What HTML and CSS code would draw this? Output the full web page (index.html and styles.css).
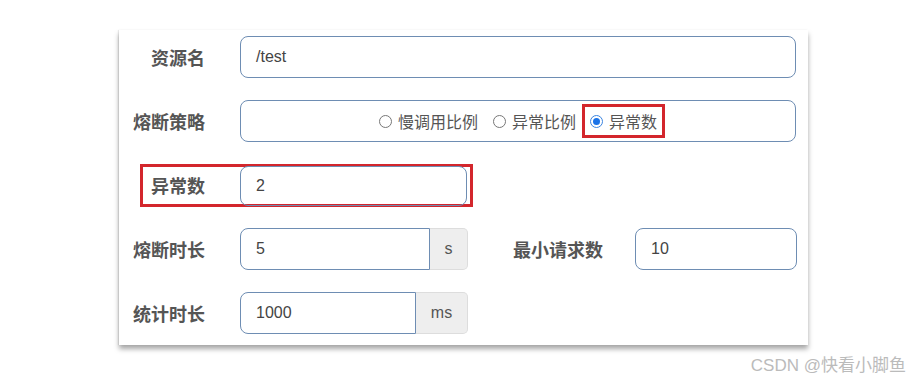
FILE: index.html
```html
<!DOCTYPE html>
<html lang="zh">
<head>
  <meta charset="UTF-8">
  <title>熔断规则</title>
  <link rel="stylesheet" href="styles.css">
</head>
<body>

  <div class="card">
    <div class="row">
      <label class="lbl">资源名</label>
      <div class="field wide">/test</div>
    </div>

    <div class="row">
      <label class="lbl">熔断策略</label>
      <div class="field wide radios">
        <span class="opt"><span class="dot"></span>慢调用比例</span>
        <span class="opt"><span class="dot"></span>异常比例</span>
        <span class="opt marked"><span class="dot on"></span>异常数</span>
      </div>
    </div>

    <div class="row">
      <div class="mark-row">
        <label class="lbl">异常数</label>
        <div class="field count">2</div>
      </div>
    </div>

    <div class="row">
      <label class="lbl">熔断时长</label>
      <div class="group">
        <div class="field g-s">5</div>
        <div class="addon a-s">s</div>
      </div>
      <label class="lbl lbl-min">最小请求数</label>
      <div class="field small">10</div>
    </div>

    <div class="row">
      <label class="lbl">统计时长</label>
      <div class="group">
        <div class="field g-ms">1000</div>
        <div class="addon a-ms">ms</div>
      </div>
    </div>
  </div>

  <div class="watermark">CSDN @快看小脚鱼</div>

</body>
</html>
```

FILE: styles.css
```css
body {
  margin: 0;
  background-color: #fff;
  font-family: "Liberation Sans", "Noto Sans CJK SC", sans-serif;
  color: #444;
}

.card {
  margin: 30px 0 0 119px;
  width: 689px;
  height: 315px;
  padding-top: 6px;
  box-sizing: border-box;
  background-color: #fff;
  box-shadow: 0 4px 5px rgba(0, 0, 0, 0.35), -1px 0 1px rgba(0, 0, 0, 0.08);
}

.row {
  display: flex;
  align-items: center;
  height: 42px;
  margin-bottom: 22px;
}

.lbl {
  width: 86px;
  margin-right: 35px;
  text-align: right;
  font-family: "Noto Sans CJK SC", sans-serif;
  font-weight: bold;
  font-size: 18px;
  color: #555;
  flex-shrink: 0;
}

.field {
  height: 42px;
  box-sizing: border-box;
  border: 1px solid #6e8db3;
  border-radius: 8px;
  padding-left: 15px;
  display: flex;
  align-items: center;
  font-size: 16px;
  color: #444;
}

.wide {
  width: 556px;
}

.radios {
  justify-content: center;
  padding-left: 8px;
  padding-right: 0;
  font-family: "Noto Sans CJK SC", sans-serif;
  font-size: 16px;
  color: #555;
  gap: 15px;
}

.opt {
  display: flex;
  align-items: center;
  gap: 6px;
}

.dot {
  width: 13px;
  height: 13px;
  border: 1px solid #777;
  border-radius: 50%;
  box-sizing: border-box;
  position: relative;
}

.dot.on {
  border-color: #3a84e0;
}

.dot.on::after {
  content: "";
  position: absolute;
  left: 2px;
  top: 2px;
  width: 7px;
  height: 7px;
  border-radius: 50%;
  background-color: #1a73e8;
}

.marked {
  border: 3px solid #d3262c;
  height: 34px;
  box-sizing: border-box;
  padding: 0 5px 0 5px;
  margin-left: -9px;
}

.mark-row {
  display: flex;
  align-items: center;
  margin-left: 21px;
  width: 333px;
  height: 43px;
  box-sizing: border-box;
  border: 3px solid #d3262c;
}

.mark-row .lbl {
  width: 62px;
  margin-right: 35px;
}

.count {
  width: 227px;
  height: 40px;
  margin-top: 2px;
}

.group {
  display: flex;
  width: 228px;
}

.group .field {
  border-radius: 8px 0 0 8px;
}

.g-s {
  width: 190px;
}

.g-ms {
  width: 176px;
}

.addon {
  flex: 1;
  height: 42px;
  box-sizing: border-box;
  background-color: #eee;
  border: 1px solid #ddd;
  border-left: none;
  border-radius: 0 5px 5px 0;
  display: flex;
  align-items: center;
  justify-content: center;
  font-size: 16px;
  color: #555;
}

.lbl-min {
  width: 90px;
  margin-left: 45px;
  margin-right: 32px;
  text-align: left;
}

.small {
  width: 162px;
}

.watermark {
  text-align: right;
  padding-right: 6px;
  margin-top: 6px;
  font-family: "Liberation Sans", "Noto Sans CJK SC", sans-serif;
  font-size: 17px;
  color: #bbb;
}
```
